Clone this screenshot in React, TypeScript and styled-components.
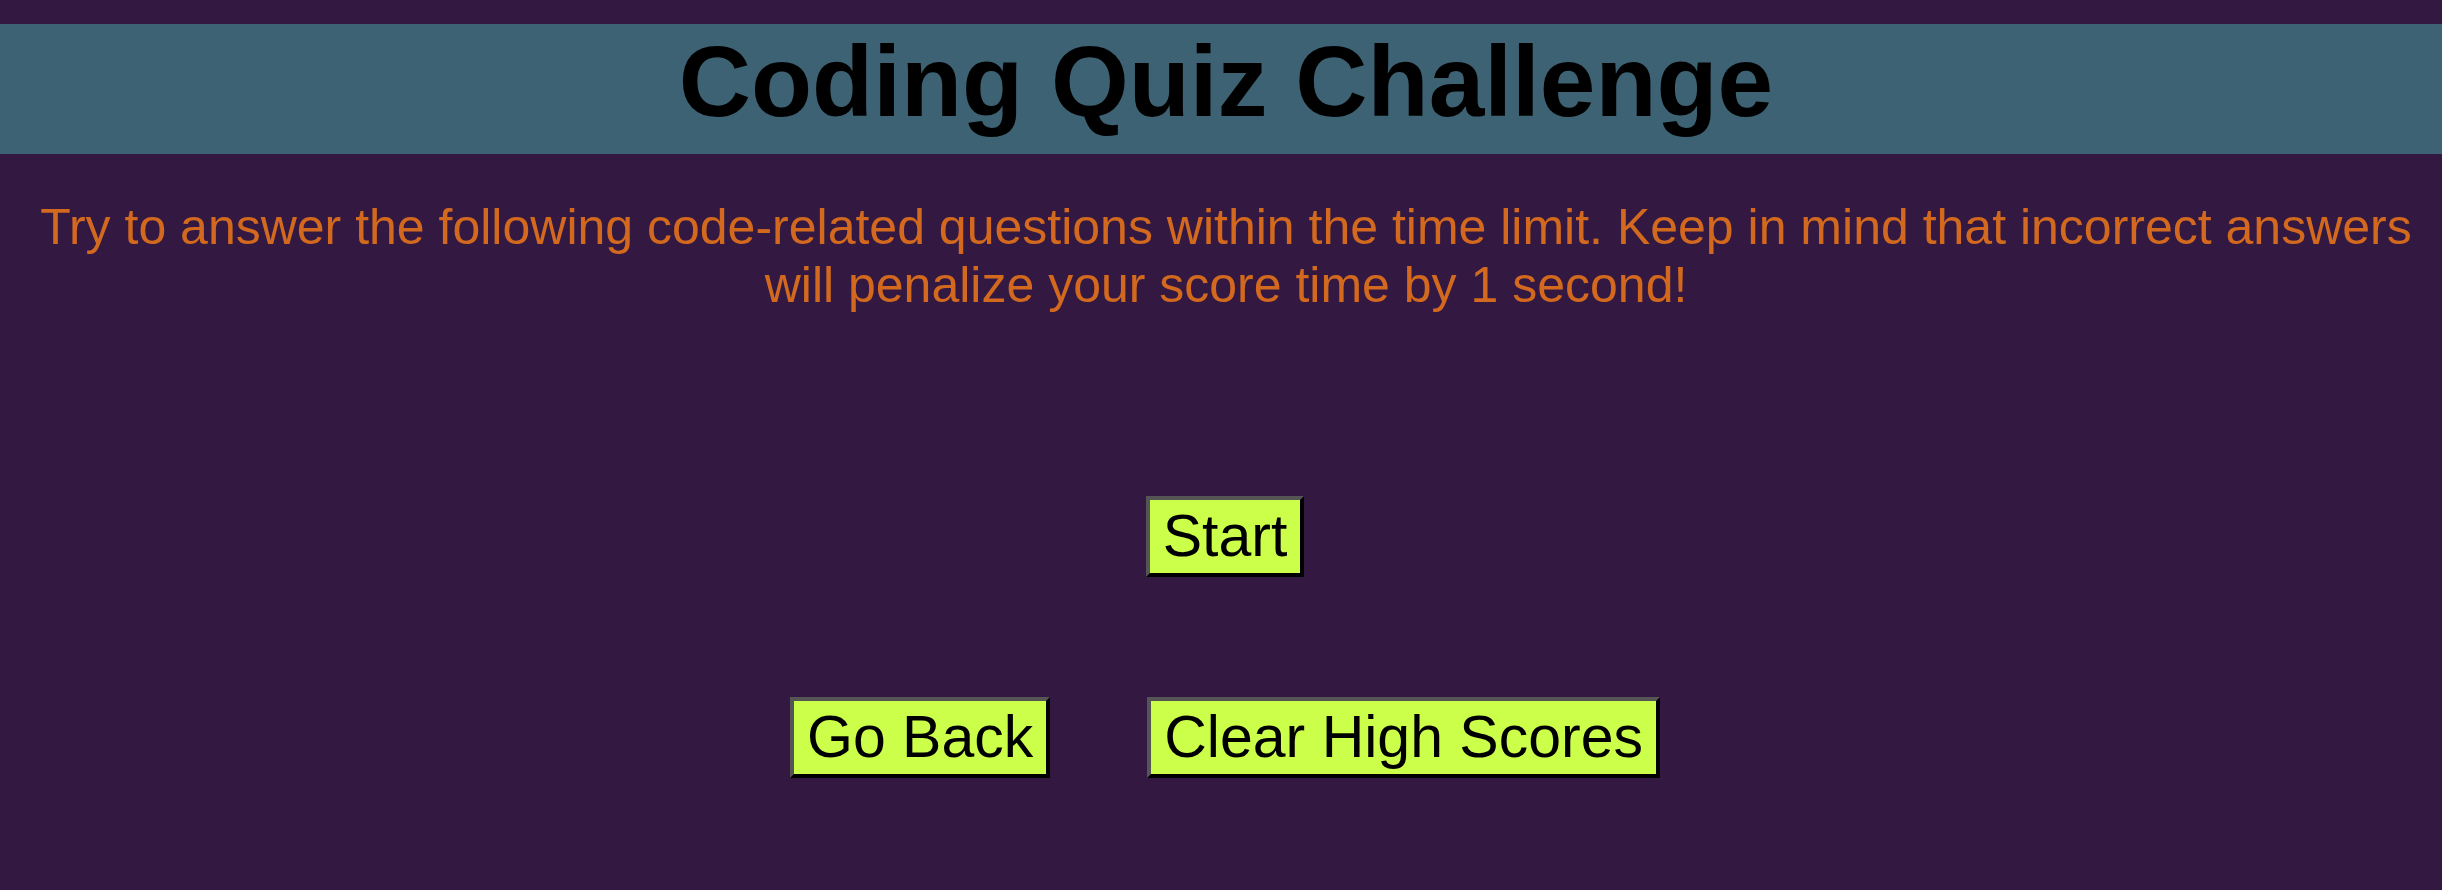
import React from "react";
import styled, { createGlobalStyle } from "styled-components";

const GlobalStyle = createGlobalStyle`
  html, body {
    margin: 0;
    padding: 0;
    background: #331941;
  }
  body {
    font-family: "Liberation Sans", Arial, sans-serif;
    min-height: 890px;
  }
`;

const Page = styled.div`
  display: flex;
  flex-direction: column;
  align-items: stretch;
  padding-top: 24px;
`;

const Header = styled.header`
  background: #3d6273;
  height: 130px;
  box-sizing: border-box;
  display: flex;
  justify-content: center;
  align-items: flex-start;
  padding-left: 10px;
`;

const Title = styled.h1`
  margin: 0;
  font-size: 100px;
  font-weight: 700;
  line-height: 115px;
  color: #000;
`;

const Intro = styled.p`
  margin: 45px 0 0 10px;
  font-size: 50px;
  line-height: 57.5px;
  color: #d2691e;
  text-align: center;
`;

const Row = styled.div<{ $top: number }>`
  display: flex;
  justify-content: center;
  gap: 97px;
  margin-top: ${(p) => p.$top}px;
  padding-left: 8px;
`;

const Button = styled.button`
  font-family: "Liberation Sans", Arial, sans-serif;
  font-size: 59px;
  line-height: 68px;
  color: #000;
  background: #ccff4a;
  padding: 2px 13px 3px;
  border-style: solid;
  border-width: 4px;
  border-color: #555555 #000000 #000000 #555555;
  border-radius: 0;
  cursor: pointer;
`;

export default function App() {
  return (
    <>
      <GlobalStyle />
      <Page>
        <Header>
          <Title>Coding Quiz Challenge</Title>
        </Header>
        <Intro>
          Try to answer the following code-related questions within the time
          limit. Keep in mind that incorrect answers will penalize your score
          time by 1 second!
        </Intro>
        <Row $top={182}>
          <Button>Start</Button>
        </Row>
        <Row $top={120}>
          <Button>Go Back</Button>
          <Button>Clear High Scores</Button>
        </Row>
      </Page>
    </>
  );
}
